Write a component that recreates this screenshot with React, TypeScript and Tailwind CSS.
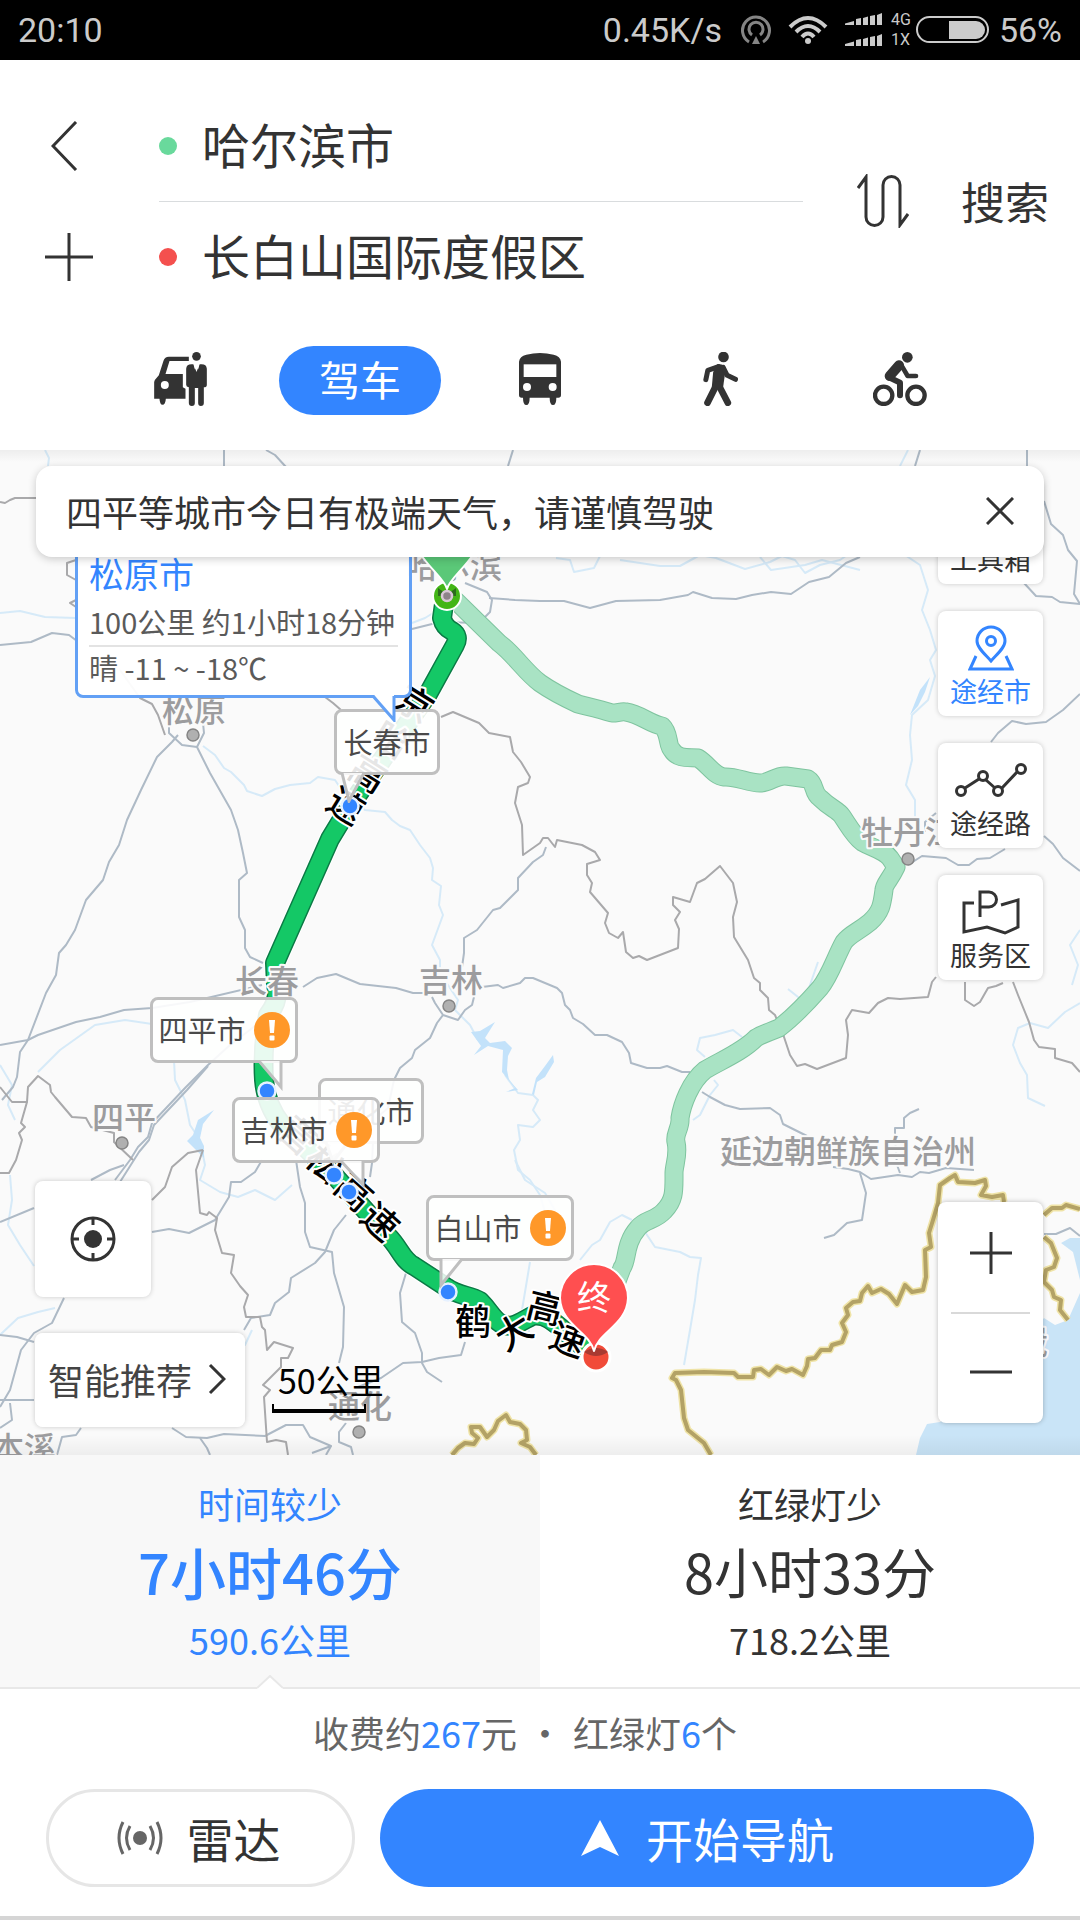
import { useState } from "react";
import { Briefcase } from "lucide-react";

const roads = [
  "0,645 31,642 52,633 69,635 77,641",
  "224,466 224,450",
  "266,450 275,455 286,467",
  "513,450 508,466",
  "169,723 169,733 182,745 197,747 204,733 203,723",
  "178,735 172,742 157,757 141,790 127,820 119,845 109,862 103,880 86,900 75,930 66,945 59,953 56,975 46,993 28,1040 20,1052 17,1077 13,1087 2,1100",
  "197,747 210,773 231,810 238,830 243,853 247,873 239,880 239,917 245,930 245,948 250,957 263,963",
  "0,1045 28,1040 38,1035 76,1022 100,1017 124,1010 152,1008 190,1002 262,985",
  "303,987 317,978 336,974 360,984 396,988 413,993 430,993",
  "432,997 435,1003 443,1015 458,1020 465,1010 472,1005 474,997",
  "462,967 464,953 464,938 477,930 493,910 500,908 518,890 518,878 533,862 543,855 546,847",
  "482,987 498,985 503,988 520,983 525,978 533,978 557,988 562,993 565,1005 570,1010 573,1018 583,1024 595,1035 607,1035 622,1042 629,1053 631,1063 647,1068 660,1068 667,1066 682,1072 690,1072",
  "702,1092 710,1097 725,1105 740,1109 770,1108 780,1115 783,1124 807,1136",
  "833,1167 848,1169 860,1172 871,1179 898,1175 912,1177 920,1172 929,1173 946,1168 960,1169 974,1170",
  "860,1173 866,1193 862,1220 847,1223 834,1235 824,1238",
  "919,1109 910,1113 904,1118 904,1128 895,1128 895,1138 897,1165 900,1173",
  "443,1015 437,1023 430,1038 415,1050 412,1058 400,1068 394,1080 388,1108 374,1120 372,1163 370,1177",
  "263,1020 230,1045 208,1065 186,1087 152,1123 148,1137 138,1147 130,1160 115,1180",
  "208,1066 187,1090 154,1125 149,1140 139,1152 120,1182",
  "0,1222 34,1208",
  "91,1180 110,1170 124,1165",
  "296,1160 300,1187 305,1203 305,1232 310,1247 332,1252 334,1273 344,1307 343,1347 339,1363",
  "346,1215 334,1230 325,1252 315,1263 291,1278 289,1292 275,1303 270,1315 251,1318 244,1330",
  "152,1232 169,1229 189,1233 215,1220 229,1197 231,1182 241,1182 255,1172 262,1160",
  "406,1273 400,1293 402,1322 415,1333 422,1353 422,1363 427,1372 442,1382",
  "465,1342 461,1355 439,1358 422,1362 403,1363 381,1378 358,1387",
  "172,1428 186,1437 207,1438 224,1434 265,1436 286,1425 303,1425 310,1437 331,1446 312,1453",
  "346,1423 339,1432 339,1442 351,1447 353,1455",
  "200,1438 207,1448 210,1455",
  "331,1446 326,1455",
  "64,1298 52,1323 34,1333 21,1350 10,1390 0,1407",
  "0,1335 17,1337 34,1342",
  "0,1400 34,1400",
  "10,1403 12,1420 0,1428",
  "81,1428 76,1435 62,1437 57,1455",
  "920,450 915,466",
  "1027,450 1027,466",
  "1044,501 1051,524 1063,535 1068,550 1077,561 1074,594 1080,604",
  "1024,583 1036,596 1052,597 1060,602 1080,604",
  "412,629 440,622 479,623 490,612 492,600 487,592 465,583",
  "489,598 515,600 540,601 564,601 590,608 616,601 660,600 688,595 693,592 712,598 736,599 752,595 771,592 791,594 809,582 829,577 846,563 860,557",
  "991,742 998,733 1012,721 1026,724 1046,722 1063,710 1080,694",
  "908,865 922,856 946,858 958,865 969,865 977,859 990,858 1005,849",
  "936,813 925,822 925,832",
  "1044,836 1053,844 1063,858 1080,871",
  "1044,1234 1056,1234 1070,1228 1080,1236",
];

const provinceLines = [
  "0,502 5,503 10,500 15,498 36,498",
  "76,560 67,563 67,575 76,580",
  "76,600 70,603 76,607",
  "120,670 140,698 152,704 158,715 165,735",
  "325,697 333,703 341,710",
  "441,717 453,712 479,723 489,733 510,737 513,752 521,762 530,777 528,783 518,787 515,803 522,825 523,855 540,843 543,838 548,838 555,847 557,840 582,845 595,852 600,860 587,864 587,875 592,883 590,892 608,913 605,923 609,933 618,938 623,932 626,952 633,958 639,956 647,960 678,948 679,929 675,920 680,912 673,905 673,897 690,902 697,883 705,879 720,866 733,883 737,902 733,917 734,937 748,960 754,978 760,983 760,990 768,998 769,1010 775,1015 784,1037 790,1055 797,1066 805,1064 817,1069 846,1058 848,1035 846,1020 852,1010 869,1013 878,1003 888,998 900,999 928,997 932,982 936,977",
  "965,982 965,1000 974,1006 980,1002 988,988 996,986 1003,983",
  "1013,982 1018,995 1029,1022 1034,1040 1039,1047 1055,1049 1055,1058 1072,1063 1080,1072",
  "0,1087 12,1102 27,1102 28,1087 38,1076 50,1085 51,1092 55,1097 72,1117 86,1118 91,1127 114,1133 114,1142 133,1160",
  "27,1102 21,1123 25,1127 19,1133 22,1140 16,1160 9,1173 0,1173",
  "203,1150 188,1153 172,1167 165,1187 152,1200",
  "203,1150 196,1170 200,1213 207,1215 209,1212 217,1218 215,1230 222,1253 234,1255 231,1273 240,1286 248,1295 244,1307 246,1317 260,1317 262,1327 265,1330 267,1350 274,1342 293,1348 288,1358 281,1358 281,1367 263,1385 270,1390 264,1397 267,1442 276,1440 286,1442 288,1455",
];

const rivers = [
  "0,613 20,611 45,617 76,618",
  "45,450 49,458 48,466",
  "203,746 215,755 224,768 231,772 244,785 247,791 262,796 275,789 290,785 310,783 318,777 335,780 345,795 365,810 385,812 392,820 400,826 410,830 420,845 430,858 433,868 432,880 441,886 439,905 443,915 432,945 440,960 440,968",
  "430,968 448,985 458,1000 455,1010 470,1025 478,1040",
  "505,1075 518,1093 533,1095 538,1100 533,1110 540,1120 533,1127 518,1125 520,1140 514,1150 518,1170 530,1180 540,1195 545,1212",
  "760,557 771,570 805,565 822,560 860,570",
  "620,560 660,566 680,566 700,555 716,558 745,569 770,562 782,556 795,560 805,573 820,565 840,560 850,553",
  "556,558 570,560 574,572 594,568 600,556",
  "905,555 920,565 928,590 922,610 930,630 936,650 930,660 935,676 928,700 912,715 910,735 912,760 906,785 915,800 915,820",
  "1080,1003 1065,1012 1048,1028 1030,1023 1018,1028 1013,1045 1020,1063 1027,1075 1028,1098 1045,1106",
  "0,1065 12,1085 8,1105 15,1120",
  "38,1072 60,1050 95,1025 125,1020 152,1024",
  "174,1060 175,1080 185,1100 190,1125 200,1140 205,1165 200,1180 220,1192 238,1197 255,1190 275,1200 292,1185",
  "10,1175 12,1200 8,1225 20,1245 34,1266",
  "0,1335 18,1318 38,1312 55,1308",
  "515,1160 525,1180 545,1193 556,1212",
  "580,1260 592,1245 600,1240 610,1222 622,1215 632,1220",
  "530,1262 527,1280 522,1310 530,1335",
  "645,1232 655,1247 680,1252 690,1257 701,1258 698,1275 695,1300 690,1330 684,1365",
  "705,1057 697,1050 700,1038 715,1035 733,1030 742,1037",
  "714,1080 718,1085 710,1095 700,1115 693,1120",
  "788,989 798,997 803,1005 818,962",
  "1080,930 1070,945 1078,965 1072,985",
  "412,623 425,618 438,610",
  "908,450 900,466",
  "252,1330 245,1345 240,1337",
];

const borders = [
  "452,1455 458,1448 465,1443 474,1444 478,1438 472,1433 471,1427 480,1427 487,1437 494,1430 498,1421 506,1415 510,1422 520,1424 526,1430 527,1440 521,1443 530,1447 536,1455",
  "711,1455 704,1443 688,1430 684,1418 681,1390 676,1380 672,1378 675,1373 704,1372 734,1373 738,1377 753,1377 754,1370 761,1369 769,1375 777,1367 786,1371 792,1369 803,1375 807,1366 808,1359 815,1358 821,1350 830,1350 832,1345 842,1342 846,1332 842,1323 848,1315 846,1308 853,1302 860,1301 862,1293 868,1286 872,1293 881,1289 889,1294 897,1304 905,1285 912,1292 923,1290 926,1277 925,1250 931,1247 929,1233 933,1220 938,1203 940,1185 950,1178 955,1175 958,1182 975,1183 985,1180 986,1186 981,1195 992,1197 1003,1195 1004,1202",
  "1044,1215 1052,1208 1062,1208 1066,1205 1080,1209",
  "1044,1237 1051,1243 1057,1258 1054,1267 1046,1270 1044,1282 1052,1290 1054,1297 1061,1300 1060,1310 1068,1320",
];

const altRoute =
  "M455 600 L499 643 C515 655 525 672 540 683 C550 690 565 698 578 704 C590 707 600 709 612 713 C618 713 622 711 626 712 C640 714 650 724 662 726 C670 733 667 746 672 750 C678 760 690 757 698 758 C708 764 714 776 724 777 C736 776 748 783 760 783 C770 783 776 775 786 776 L808 779 C816 784 812 792 820 798 C830 808 838 810 842 816 C850 828 854 836 862 842 C872 848 884 850 890 858 L896 867 C890 880 884 884 884 890 C882 905 881 912 870 922 C858 932 850 934 844 942 C836 956 830 976 820 988 C806 1004 792 1018 779 1028 C770 1032 762 1034 756 1038 C742 1052 722 1060 705 1070 C690 1082 682 1105 680 1118 C681 1128 674 1134 676 1142 C679 1155 674 1165 674 1173 C674 1190 675 1200 664 1211 C655 1221 645 1219 638 1228 C624 1244 628 1260 622 1268 L608 1305";

const mainRoute =
  "M445 597 L442 618 Q444 627 452 631 Q460 636 455 645 L428 694 L350 806 L330 839 L275 963 L276 985 Q280 1000 268 1015 Q262 1050 264 1080 Q266 1105 282 1125 L334 1175 L349 1192 L388 1236 C400 1248 402 1260 414 1266 L446 1287 C458 1296 470 1295 480 1301 C490 1311 492 1318 500 1323 C512 1330 520 1322 532 1316 C550 1312 560 1330 596 1357";

const cities = [
  { name: "松原", x: 162, y: 722, dot: [193, 735] },
  { name: "长春", x: 235, y: 993, dot: null },
  { name: "吉林", x: 419, y: 992, dot: [449, 1006] },
  { name: "四平", x: 92, y: 1129, dot: [122, 1143] },
  { name: "延边朝鲜族自治州", x: 720, y: 1163, dot: null },
  { name: "牡丹江", x: 861, y: 844, dot: [908, 859] },
  { name: "通化", x: 328, y: 1418, dot: [359, 1432] },
  { name: "本溪", x: -8, y: 1460, dot: null },
  { name: "哈尔滨", x: 406, y: 578, dot: null },
  { name: "崴", x: 1016, y: 1354, dot: null },
];

const roadNames = [
  { char: "京", x: 415, y: 704, turn: 32 },
  { char: "哈", x: 392, y: 740, turn: 32 },
  { char: "高", x: 368, y: 774, turn: 32 },
  { char: "速", x: 346, y: 806, turn: 32 },
  { char: "营", x: 298, y: 1136, turn: 42 },
  { char: "松", x: 325, y: 1164, turn: 42 },
  { char: "高", x: 354, y: 1192, turn: 42 },
  { char: "速", x: 380, y: 1222, turn: 42 },
  { char: "鹤", x: 473, y: 1322, turn: 0 },
  { char: "大", x: 514, y: 1332, turn: -32 },
  { char: "高", x: 545, y: 1308, turn: 14 },
  { char: "速", x: 568, y: 1340, turn: 20 },
];

const viaDots = [
  [350, 806],
  [267, 1091],
  [334, 1175],
  [349, 1192],
  [448, 1292],
];

const callouts = [
  { name: "长春市", warn: false, box: "left-[334px] top-[259px] w-[106px]", tail: "8,64 15,92 30,64" },
  { name: "四平市", warn: true, box: "left-[150px] top-[547px] w-[148px]", tail: "109,64 131,90 131,64" },
  { name: "通化市", warn: false, box: "left-[318px] top-[628px] w-[106px]", tail: "8,64 15,84 30,64" },
  { name: "吉林市", warn: true, box: "left-[232px] top-[647px] w-[148px]", tail: "109,64 131,88 131,64" },
  { name: "白山市", warn: true, box: "left-[426px] top-[745px] w-[148px]", tail: "15,64 15,90 36,64" },
];

const MapCanvas = () => (
  <svg
    className="absolute inset-0 h-full w-full"
    viewBox="0 450 1080 1005"
    preserveAspectRatio="xMinYMin slice"
    fill="none"
    strokeLinejoin="round"
    aria-hidden="true"
  >
    <path d="M916 1455 L920 1438 L927 1424 L940 1422 L1000 1370 L1044 1318 L1055 1325 L1068 1320 L1080 1293 V1455Z" fill="#c9e4f7" />
    <path d="M1061 1243 L1070 1238 H1080 V1280 L1073 1252Z" fill="#c9e4f7" />
    <g stroke="#d6eaf8" strokeWidth="2">
      {rivers.map((points) => (
        <polyline key={points} points={points} />
      ))}
    </g>
    <g fill="#c3e2fa">
      <path d="M471 1032 L480 1031 L495 1022 L485 1038 L490 1043 L505 1041 L512 1048 L508 1056 L507 1070 L509 1080 L518 1090 L506 1092 L515 1088 L502 1072 L503 1050 L488 1046 L474 1055 L481 1046Z" />
      <path d="M553 1055 L554 1062 L545 1077 L537 1082 L534 1095 L532 1094 L536 1078 L545 1066Z" />
      <path d="M214 1110 L203 1124 L200 1138 L204 1146 L204 1158 L187 1141 L193 1135 L198 1120Z" />
      <path d="M930 677 L925 692 L918 706 L910 715 L920 690Z" />
    </g>
    <g stroke="#aebac6" strokeWidth="2">
      {roads.map((points) => (
        <polyline key={points} points={points} />
      ))}
    </g>
    <g stroke="#a9a9ab" strokeWidth="2">
      {provinceLines.map((points) => (
        <polyline key={points} points={points} />
      ))}
    </g>
    {borders.map((points) => (
      <g key={points}>
        <polyline points={points} stroke="#efe3a6" strokeWidth="7" />
        <polyline points={points} stroke="#b3a266" strokeWidth="4" />
      </g>
    ))}

    <path d={altRoute} stroke="#7fc49f" strokeWidth="19" />
    <path d={altRoute} stroke="#a9e3c4" strokeWidth="17" />
    <path d={mainRoute} stroke="#ffffff" strokeWidth="22" />
    <path d={mainRoute} stroke="#0b7a45" strokeWidth="20" />
    <path d={mainRoute} stroke="#14c866" strokeWidth="17" />

    <g fontSize="32" fontWeight="500" fill="#9c9c9e" stroke="#fafafa" strokeWidth="4" paintOrder="stroke">
      {cities.map((city) => (
        <text key={city.name} x={city.x} y={city.y}>
          {city.name}
        </text>
      ))}
    </g>
    {cities.map(
      (city) =>
        city.dot && <circle key={city.name} cx={city.dot[0]} cy={city.dot[1]} r="6" fill="#b0b0b0" stroke="#858585" strokeWidth="1.5" />
    )}
    <g fontSize="36" fontWeight="500" fill="#000000" stroke="#ffffff" strokeWidth="4" paintOrder="stroke" textAnchor="middle">
      {roadNames.map((road) => (
        <text key={`${road.x}-${road.y}`} transform={`translate(${road.x} ${road.y}) rotate(${road.turn})`} y="13">
          {road.char}
        </text>
      ))}
    </g>
    {viaDots.map(([x, y]) => (
      <circle key={x} cx={x} cy={y} r="8.5" fill="#3385ff" stroke="#e6f1ff" strokeWidth="2.5" />
    ))}

    {/* Start marker */}
    <circle cx="447" cy="596" r="14" fill="#43b516" stroke="#ffffff" strokeWidth="2" />
    <path d="M438 588 Q447 596 456 588 L456 596 H438Z" fill="#2b6b1c" />
    <circle cx="447" cy="596" r="5" fill="#8d8389" stroke="#d9c8d6" strokeWidth="2.5" />
    <path d="M447 589 C444 576 414 558 413 533 A34 34 0 0 1 481 533 C480 558 450 576 447 589Z" fill="#5bc878" stroke="#ffffff" strokeWidth="2" />

    {/* Destination marker */}
    <circle cx="596" cy="1357" r="14" fill="#f14b39" stroke="#ffffff" strokeWidth="3" />
    <path d="M584 1352 Q596 1344 608 1352 Q596 1360 584 1352Z" fill="#a83a32" />
    <path d="M594 1351 C590 1332 561 1325 560 1298 A34 34 0 0 1 628 1298 C627 1325 598 1332 594 1351Z" fill="#ff4f50" stroke="#ffffff" strokeWidth="2" />
    <text x="594" y="1310" fontSize="34" fill="#ffffff" textAnchor="middle">
      终
    </text>
  </svg>
);

const WarnBadge = () => (
  <svg className="h-9 w-9 shrink-0" viewBox="0 0 36 36" role="img" aria-label="极端天气">
    <circle cx="18" cy="18" r="18" fill="#ff9829" />
    <path d="M15 8h6l-1 13h-4z" fill="#fff" />
    <rect x="15.500" y="23.500" width="5" height="5" rx="1" fill="#fff" />
  </svg>
);

const Callouts = () => (
  <>
    {callouts.map((c) => (
      <div
        key={c.name}
        className={`absolute flex h-[66px] items-center justify-center gap-2 rounded-lg border-[3px] border-[#bfbfbf] bg-white/90 text-[29px] text-[#4a4a4a] ${c.box}`}
      >
        {c.name}
        {c.warn && <WarnBadge />}
        <svg className="absolute -left-[3px] -top-[3px] h-[94px] w-[146px]" viewBox="0 0 146 94" aria-hidden="true">
          <polygon points={c.tail} fill="#ffffff" fillOpacity="0.85" />
          <polyline points={c.tail} fill="none" stroke="#bfbfbf" strokeWidth="3" />
        </svg>
      </div>
    ))}
    <div className="absolute left-[75px] top-[90px] w-[337px] rounded-lg border-[3px] border-[#62a0f5] bg-white/95 px-[11px] pb-2 text-[29px] leading-[40px] text-[#5a5a5a]">
      <div className="pb-1 pt-[6px] text-[35px] leading-[48px] text-[#3385ff]">松原市</div>
      <div className="whitespace-nowrap border-b-2 border-[#e3e3e3] pb-1">100公里 约1小时18分钟</div>
      <div>晴 -11 ~ -18℃</div>
      <svg className="absolute -bottom-[27px] left-[294px] h-[28px] w-[28px]" viewBox="0 0 28 28" aria-hidden="true">
        <polygon points="1,0 22,26 22,0" fill="#ffffff" />
        <polyline points="1,2 22,26 22,2" fill="none" stroke="#62a0f5" strokeWidth="3" />
      </svg>
    </div>
  </>
);

const StatusBar = () => (
  <div className="flex h-[60px] items-center bg-black px-[18px] font-[Roboto,sans-serif] text-[34px] text-[#cbcbcb]">
    <span className="flex-1">20:10</span>
    <span>0.45K/s</span>
    <svg className="ml-[18px] h-[32px] w-[32px]" viewBox="0 0 32 32" fill="none" stroke="#858585" strokeWidth="3" aria-hidden="true">
      <path d="M9 28 A13.500 13.500 0 1 1 23 28" />
      <path d="M12 21 A7 7 0 1 1 20 21" />
      <path d="M16 22 L20 30 H12Z" fill="#858585" stroke="none" />
    </svg>
    <svg className="ml-[16px] h-[30px] w-[40px]" viewBox="0 0 40 30" fill="none" stroke="#cbcbcb" strokeWidth="4" aria-hidden="true">
      <path d="M2 12 Q20 -6 38 12" />
      <path d="M8 17 Q20 5 32 17" />
      <path d="M14 22 Q20 15 26 22" />
      <circle cx="20" cy="26" r="3" fill="#cbcbcb" stroke="none" />
    </svg>
    <svg className="ml-[17px] h-[34px] w-[38px]" viewBox="0 0 38 34" fill="#cbcbcb" aria-hidden="true">
      <path d="M0 12 V10.500 L9 8 V12Z M11 12 V6 L16 5 V12Z M18 12 V5 L23 3.500 V12Z M25 12 V3 L30 2 V12Z M32 12 V2 L37 0 V12Z" />
      <path d="M0 33 V31 L9 28.500 V33Z M11 33 V27 L16 26 V33Z M18 33 V26 L23 24.500 V33Z M25 33 V24 L30 23 V33Z M32 33 V23 L37 21 V33Z" />
    </svg>
    <span className="ml-[8px] flex flex-col text-[16px] leading-5">
      <span>4G</span>
      <span>1X</span>
    </span>
    <svg className="ml-[5px] mr-[9px] h-[28px] w-[74px]" viewBox="0 0 74 28" aria-hidden="true">
      <rect x="1" y="1" width="71" height="25" rx="12.500" fill="none" stroke="#cbcbcb" strokeWidth="2" />
      <path d="M33 5 H60 A9 9 0 0 1 60 23 H33Z" fill="#cbcbcb" />
    </svg>
    <span>56%</span>
  </div>
);

const modes = [
  {
    id: "taxi",
    label: "打车",
    icon: (
      <svg className="h-[54px] w-[53px]" viewBox="0 0 158 162" fill="#333333" aria-hidden="true">
        <path d="M2 84 L14 70 L28 26 Q32 14 44 14 H104 V27 H46 L34 66 H86 V106 L94 110 V140 H35 Q34 158 25 158 Q17 158 16 140 H0 V90Z" />
        <circle cx="32" cy="99" r="12" fill="#ffffff" />
        <circle cx="127" cy="13" r="13" />
        <path d="M96 50 Q97 37 112 37 H118 L122 52 L127 46 L132 52 L136 37 H142 Q157 37 158 50 V98 Q158 106 149 106 V153 Q149 162 140 162 Q132 162 132 153 V108 H122 V153 Q122 162 113 162 Q104 162 104 153 V106 Q96 104 96 98Z" />
        <path d="M118 37 L127 60 L136 37Z" fill="#ffffff" />
      </svg>
    ),
  },
  { id: "drive", label: "驾车", icon: null },
  {
    id: "bus",
    label: "公交",
    icon: (
      <svg className="h-[52px] w-[42px]" viewBox="0 0 126 156" fill="#333333" aria-hidden="true">
        <path d="M0 26 Q2 10 22 5 Q63 -5 104 5 Q124 10 126 26 V126 Q126 134 118 134 H112 Q112 156 102 156 Q92 156 92 134 H32 Q32 156 22 156 Q12 156 12 134 H8 Q0 134 0 126Z" />
        <rect x="14" y="34" width="98" height="38" fill="#ffffff" />
        <circle cx="24" cy="102" r="12" fill="#ffffff" />
        <circle cx="101" cy="102" r="12" fill="#ffffff" />
      </svg>
    ),
  },
  {
    id: "walk",
    label: "步行",
    icon: (
      <svg className="h-[54px] w-[35px]" viewBox="0 0 104 162" fill="none" stroke="#333333" strokeLinecap="round" strokeLinejoin="round" aria-hidden="true">
        <circle cx="61" cy="15" r="16" fill="#333333" stroke="none" />
        <path d="M42 37 Q62 34 68 48 L60 104 H26 L30 60Z" fill="#333333" stroke="none" />
        <path d="M46 44 L14 55 L8 83" strokeWidth="15" />
        <path d="M60 46 L72 70 L97 82" strokeWidth="15" />
        <path d="M40 98 L13 152" strokeWidth="20" />
        <path d="M46 98 L74 152" strokeWidth="20" />
      </svg>
    ),
  },
  {
    id: "bike",
    label: "骑行",
    icon: (
      <svg className="h-[54px] w-[54px]" viewBox="0 0 162 162" fill="none" stroke="#333333" strokeLinecap="round" strokeLinejoin="round" aria-hidden="true">
        <circle cx="32" cy="130" r="26" strokeWidth="13" />
        <circle cx="129" cy="130" r="26" strokeWidth="13" />
        <circle cx="103" cy="16" r="16" fill="#333333" stroke="none" />
        <path d="M78 40 L50 72" strokeWidth="30" />
        <path d="M48 76 L81 92 V130" strokeWidth="18" />
        <path d="M84 38 L104 72 H129" strokeWidth="14" />
      </svg>
    ),
  },
];

const Header = () => {
  const [mode, setMode] = useState("drive");

  return (
    <header className="relative z-10 bg-white pb-[35px] pt-[30px] text-[#333333]">
      <div className="flex items-center pr-[31px]">
        <div className="w-[159px] shrink-0">
          <button className="flex h-[111px] w-full items-center pl-[51px]" aria-label="返回">
            <svg className="h-[50px] w-[27px]" viewBox="0 0 27 50" fill="none" stroke="#333333" strokeWidth="3">
              <path d="M25 1 L2 25 L25 49" />
            </svg>
          </button>
          <button className="flex h-[111px] w-full items-center pl-[45px]" aria-label="添加途经点">
            <svg className="h-12 w-12" viewBox="0 0 48 48" fill="none" stroke="#333333" strokeWidth="3">
              <path d="M24 0 V48 M0 24 H48" />
            </svg>
          </button>
        </div>
        <div className="min-w-0 flex-1">
          <label className="flex h-[112px] items-center gap-[25px] border-b border-[#d9dcde]">
            <span className="h-[18px] w-[18px] shrink-0 rounded-full bg-[#69d99c]" />
            <input className="w-full min-w-0 bg-transparent pb-[6px] text-[48px] leading-[64px] outline-none" defaultValue="哈尔滨市" aria-label="起点" />
          </label>
          <label className="flex h-[110px] items-center gap-[25px]">
            <span className="h-[18px] w-[18px] shrink-0 rounded-full bg-[#f4504e]" />
            <input className="w-full min-w-0 bg-transparent pb-[6px] text-[48px] leading-[64px] outline-none" defaultValue="长白山国际度假区" aria-label="终点" />
          </label>
        </div>
        <button className="ml-[54px]" aria-label="交换起终点">
          <svg className="h-[54px] w-[52px]" viewBox="0 0 52 54" fill="none" stroke="#333333" strokeWidth="3">
            <path d="M1 14 L9 3 V43 A8.500 8.500 0 0 0 26 43 V11 A8.500 8.500 0 0 1 43 11 V51 L51 40" />
          </svg>
        </button>
        <button className="ml-[52px] text-[44px] leading-[60px]">搜索</button>
      </div>
      <nav className="mt-[34px] grid grid-cols-5 px-[90px]">
        {modes.map((m) => (
          <button
            key={m.id}
            onClick={() => setMode(m.id)}
            aria-label={m.label}
            className={`mx-auto flex h-[69px] w-[162px] items-center justify-center rounded-full pb-1 text-[41px] ${
              mode === m.id ? "bg-[#3385ff] text-white" : ""
            }`}
          >
            {m.icon ?? m.label}
          </button>
        ))}
      </nav>
    </header>
  );
};

const tools = [
  { label: "工具箱", icon: <Briefcase className="h-11 w-11" strokeWidth={1.5} /> },
  {
    label: "途经市",
    active: true,
    icon: (
      <svg className="h-[46px] w-[46px]" viewBox="0 0 46 46" fill="none" stroke="currentColor" strokeWidth="3" aria-hidden="true">
        <path d="M23 36 C18 30 9 23 9 16 A14 14 0 0 1 37 16 C37 23 28 30 23 36Z" />
        <circle cx="23" cy="16" r="4.500" />
        <path d="M8 31 L2 44 H44 L38 31" />
      </svg>
    ),
  },
  {
    label: "途经路",
    icon: (
      <svg className="h-[36px] w-[72px]" viewBox="0 0 72 36" fill="none" stroke="currentColor" strokeWidth="3" aria-hidden="true">
        <circle cx="6" cy="29" r="4.500" />
        <circle cx="28" cy="14" r="4.500" />
        <circle cx="43" cy="29" r="4.500" />
        <circle cx="66" cy="7" r="4.500" />
        <path d="M10 26 L24 17 M31 18 L40 26 M47 26 L62 10" />
      </svg>
    ),
  },
  {
    label: "服务区",
    icon: (
      <svg className="h-[46px] w-[58px]" viewBox="0 0 58 46" fill="none" stroke="currentColor" strokeWidth="3" aria-hidden="true">
        <path d="M12 14 H2 V43 L25 38 L43 44 L56 38 V11 L39 16" />
        <path d="M18 28 V3 H27 A7.500 7.500 0 0 1 27 18 H18" />
      </svg>
    ),
  },
];

const MapSection = () => (
  <section className="relative min-h-[1005px] flex-1 overflow-hidden bg-[#fafafa]">
    <MapCanvas />
    <Callouts />

    <div className="absolute right-[37px] top-[29px] flex flex-col gap-[27px]">
      {tools.map((tool) => (
        <button
          key={tool.label}
          className={`flex h-[105px] w-[105px] flex-col items-center rounded-lg bg-white text-[27px] leading-[30px] shadow-[0_0_5px_rgba(0,0,0,0.2)] ${
            tool.active ? "text-[#3385ff]" : "text-[#333333]"
          }`}
        >
          <span className="flex h-[65px] items-center pt-2">{tool.icon}</span>
          {tool.label}
        </button>
      ))}
    </div>

    <div className="absolute left-[36px] right-[36px] top-4 flex h-[91px] items-center justify-between rounded-2xl bg-white px-[30px] pb-[2px] text-[36px] text-[#333333] shadow-[0_2px_8px_rgba(0,0,0,0.2)]">
      <p className="whitespace-nowrap">四平等城市今日有极端天气，请谨慎驾驶</p>
      <button aria-label="关闭">
        <svg className="h-[28px] w-[28px]" viewBox="0 0 28 28" fill="none" stroke="#333333" strokeWidth="3">
          <path d="M1 1 L27 27 M27 1 L1 27" />
        </svg>
      </button>
    </div>

    <div className="absolute bottom-[28px] left-[35px] right-[37px] flex items-end">
      <div className="flex flex-col gap-9">
        <button className="flex h-[116px] w-[116px] items-center justify-center rounded-lg bg-white shadow-[0_0_5px_rgba(0,0,0,0.2)]" aria-label="定位">
          <svg className="h-[46px] w-[46px]" viewBox="0 0 46 46" fill="none" stroke="#333333" strokeWidth="3">
            <circle cx="23" cy="23" r="21" />
            <circle cx="23" cy="23" r="9" fill="#333333" stroke="none" />
            <path d="M23 2 V9 M23 37 V44 M2 23 H9 M37 23 H44" />
          </svg>
        </button>
        <button className="flex h-[94px] w-[210px] items-center gap-4 rounded-lg bg-white/95 pb-[2px] pl-[13px] text-[36px] text-[#444444] shadow-[0_0_5px_rgba(0,0,0,0.2)]">
          智能推荐
          <svg className="h-[32px] w-[18px]" viewBox="0 0 18 32" fill="none" stroke="#333333" strokeWidth="3" aria-hidden="true">
            <path d="M2 2 L16 16 L2 30" />
          </svg>
        </button>
      </div>
      <div className="mb-[14px] ml-[27px] w-[94px]">
        <span className="ml-[6px] block whitespace-nowrap text-[34px] leading-[48px] text-black">50公里</span>
        <div className="h-[9px] border-x-2 border-b-4 border-black" />
      </div>
      <div className="mb-1 ml-auto flex h-[221px] w-[105px] flex-col rounded-lg bg-white px-[13px] shadow-[0_0_5px_rgba(0,0,0,0.25)]">
        <button className="flex flex-1 items-center justify-center border-b-2 border-[#d9d9d9] pb-2" aria-label="放大">
          <svg className="h-[42px] w-[42px]" viewBox="0 0 42 42" stroke="#333333" strokeWidth="3">
            <path d="M21 0 V42 M0 21 H42" />
          </svg>
        </button>
        <button className="flex flex-1 items-center justify-center pt-2" aria-label="缩小">
          <svg className="h-[42px] w-[42px]" viewBox="0 0 42 42" stroke="#333333" strokeWidth="3">
            <path d="M0 21 H42" />
          </svg>
        </button>
      </div>
    </div>
    <div className="pointer-events-none absolute inset-x-0 top-0 h-3 bg-gradient-to-b from-black/5 to-transparent" />
    <div className="pointer-events-none absolute inset-x-0 bottom-0 h-5 bg-gradient-to-t from-black/5 to-transparent" />
  </section>
);

const routes = [
  { tag: "时间较少", time: "7小时46分", distance: "590.6公里" },
  { tag: "红绿灯少", time: "8小时33分", distance: "718.2公里" },
];

const RoutePanel = () => {
  const [selected, setSelected] = useState(0);

  return (
    <footer className="border-b-4 border-[#d5d5d5] bg-white">
      <div className="grid grid-cols-2 border-b-2 border-[#e8e8e8]">
        {routes.map((route, i) => (
          <button
            key={route.tag}
            onClick={() => setSelected(i)}
            className={`relative flex h-[232px] flex-col items-center pt-6 ${
              selected === i ? "bg-[#f8f8f8] text-[#3385ff]" : "text-[#333333]"
            }`}
          >
            <span className="text-[36px] leading-[48px]">{route.tag}</span>
            <span className={selected === i ? "text-[56px] font-medium leading-[88px]" : "text-[54px] leading-[88px]"}>{route.time}</span>
            <span className="text-[36px] leading-[48px]">{route.distance}</span>
            {selected === i && (
              <svg className="absolute -bottom-[2px] left-1/2 h-[14px] w-[26px] -translate-x-1/2" viewBox="0 0 26 14" aria-hidden="true">
                <path d="M0 13 L13 1 L26 13 V14 H0Z" fill="#ffffff" />
                <path d="M0 13 L13 1 L26 13" fill="none" stroke="#e8e8e8" strokeWidth="2" />
              </svg>
            )}
          </button>
        ))}
      </div>
      <p className="flex h-[90px] items-center justify-center gap-[10px] pb-1 pr-[30px] text-[36px] text-[#666666]">
        <span>
          收费约<span className="text-[#3385ff]">267</span>元
        </span>
        <span>·</span>
        <span>
          红绿灯<span className="text-[#3385ff]">6</span>个
        </span>
      </p>
      <div className="flex gap-[25px] px-[46px] pb-[29px] pt-[10px]">
        <button className="flex h-[98px] w-[309px] items-center justify-center gap-6 rounded-full border-[3px] border-[#e6e6e6] pr-1 text-[47px] text-[#333333]">
          <svg className="h-[34px] w-[46px]" viewBox="0 0 46 34" fill="none" stroke="#666666" strokeWidth="3" aria-hidden="true">
            <circle cx="23" cy="17" r="7" fill="#666666" stroke="none" />
            <path d="M13 5 Q6 17 13 29 M6 1 Q-2 17 6 33 M33 5 Q40 17 33 29 M40 1 Q48 17 40 33" />
          </svg>
          雷达
        </button>
        <button className="flex h-[98px] flex-1 items-center justify-center gap-[26px] rounded-full bg-[#3385ff] text-[47px] text-white">
          <svg className="h-9 w-10" viewBox="0 0 40 36" fill="#ffffff" aria-hidden="true">
            <path d="M20 0 L39 36 L20 27 L1 36Z" />
          </svg>
          开始导航
        </button>
      </div>
    </footer>
  );
};

const App = () => (
  <div className="flex min-h-screen flex-col bg-white font-['Noto_Sans_CJK_SC',sans-serif]">
    <StatusBar />
    <Header />
    <MapSection />
    <RoutePanel />
  </div>
);

export default App;
